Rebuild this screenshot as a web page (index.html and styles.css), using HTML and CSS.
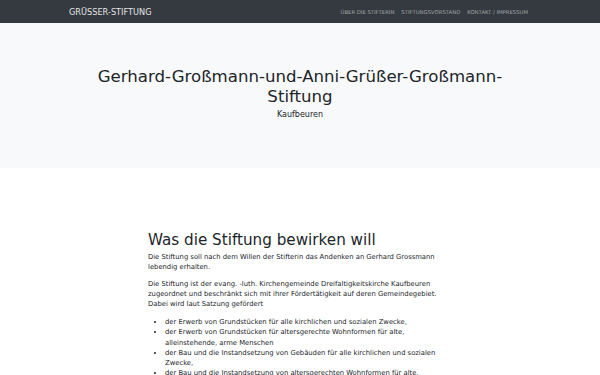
FILE: index.html
```
<!DOCTYPE html>
<html lang="de">
<head>
    <meta charset="UTF-8">
    <meta name="viewport" content="width=device-width, initial-scale=1.0">
    <title>Grüßer-Stiftung</title>
    <link rel="stylesheet" href="styles.css">
</head>
<body>
    <nav class="navbar">
        <a class="brand" href="#">Grüsser-Stiftung</a>
        <ul class="nav-links">
            <li><a href="#">Über die Stifterin</a></li>
            <li><a href="#">Stiftungsvorstand</a></li>
            <li><a href="#">Kontakt / Impressum</a></li>
        </ul>
    </nav>

    <header class="jumbotron">
        <h1>Gerhard-Großmann-und-Anni-Grüßer-Großmann-<br>Stiftung</h1>
        <p class="lead">Kaufbeuren</p>
    </header>

    <main class="content">
        <h2>Was die Stiftung bewirken will</h2>
        <p>Die Stiftung soll nach dem Willen der Stifterin das Andenken an Gerhard Grossmann lebendig erhalten.</p>
        <p>Die Stiftung ist der evang. -luth. Kirchengemeinde Dreifaltigkeitskirche Kaufbeuren zugeordnet und beschränkt sich mit ihrer Fördertätigkeit auf deren Gemeindegebiet. Dabei wird laut Satzung gefördert</p>
        <ul>
            <li>der Erwerb von Grundstücken für alle kirchlichen und sozialen Zwecke,</li>
            <li>der Erwerb von Grundstücken für altersgerechte Wohnformen für alte, alleinstehende, arme Menschen</li>
            <li>der Bau und die Instandsetzung von Gebäuden für alle kirchlichen und sozialen Zwecke,</li>
            <li>der Bau und die Instandsetzung von altersgerechten Wohnformen für alte, alleinstehende, arme Menschen</li>
        </ul>
    </main>
</body>
</html>
```

FILE: styles.css
```
body {
    margin: 0;
    font-family: "DejaVu Sans", sans-serif;
    font-size: 6.8px;
    line-height: 10px;
    color: #212529;
    background: white;
}
a {
    text-decoration: none;
}
.navbar {
    display: flex;
    align-items: center;
    justify-content: space-between;
    height: 23px;
    padding: 0 72px 0 69px;
    background-color: #343a40;
}
.brand {
    font-size: 8.2px;
    text-transform: uppercase;
    color: #e4e5e6;
}
.nav-links {
    display: flex;
    gap: 7px;
    margin: 0;
    padding: 0;
    list-style: none;
}
.nav-links a {
    font-size: 5.3px;
    text-transform: uppercase;
    color: #a3a6a9;
}
.jumbotron {
    height: 145px;
    padding-top: 44px;
    box-sizing: border-box;
    background-color: #f8f9fa;
    text-align: center;
}
.jumbotron h1 {
    margin: 0;
    font-size: 16.6px;
    font-weight: normal;
    line-height: 20px;
}
.lead {
    margin: 2px 0 0;
    font-size: 8px;
    line-height: 12px;
}
.content {
    width: 304px;
    margin: 0 auto;
    padding-top: 63px;
}
.content h2 {
    margin: 0 0 3px;
    font-size: 15.2px;
    font-weight: normal;
    line-height: 18px;
}
.content p {
    margin: 0 0 7px;
}
.content ul {
    margin: 8px 0 0;
    padding-left: 17px;
}
.content li {
    line-height: 10.3px;
}
```
